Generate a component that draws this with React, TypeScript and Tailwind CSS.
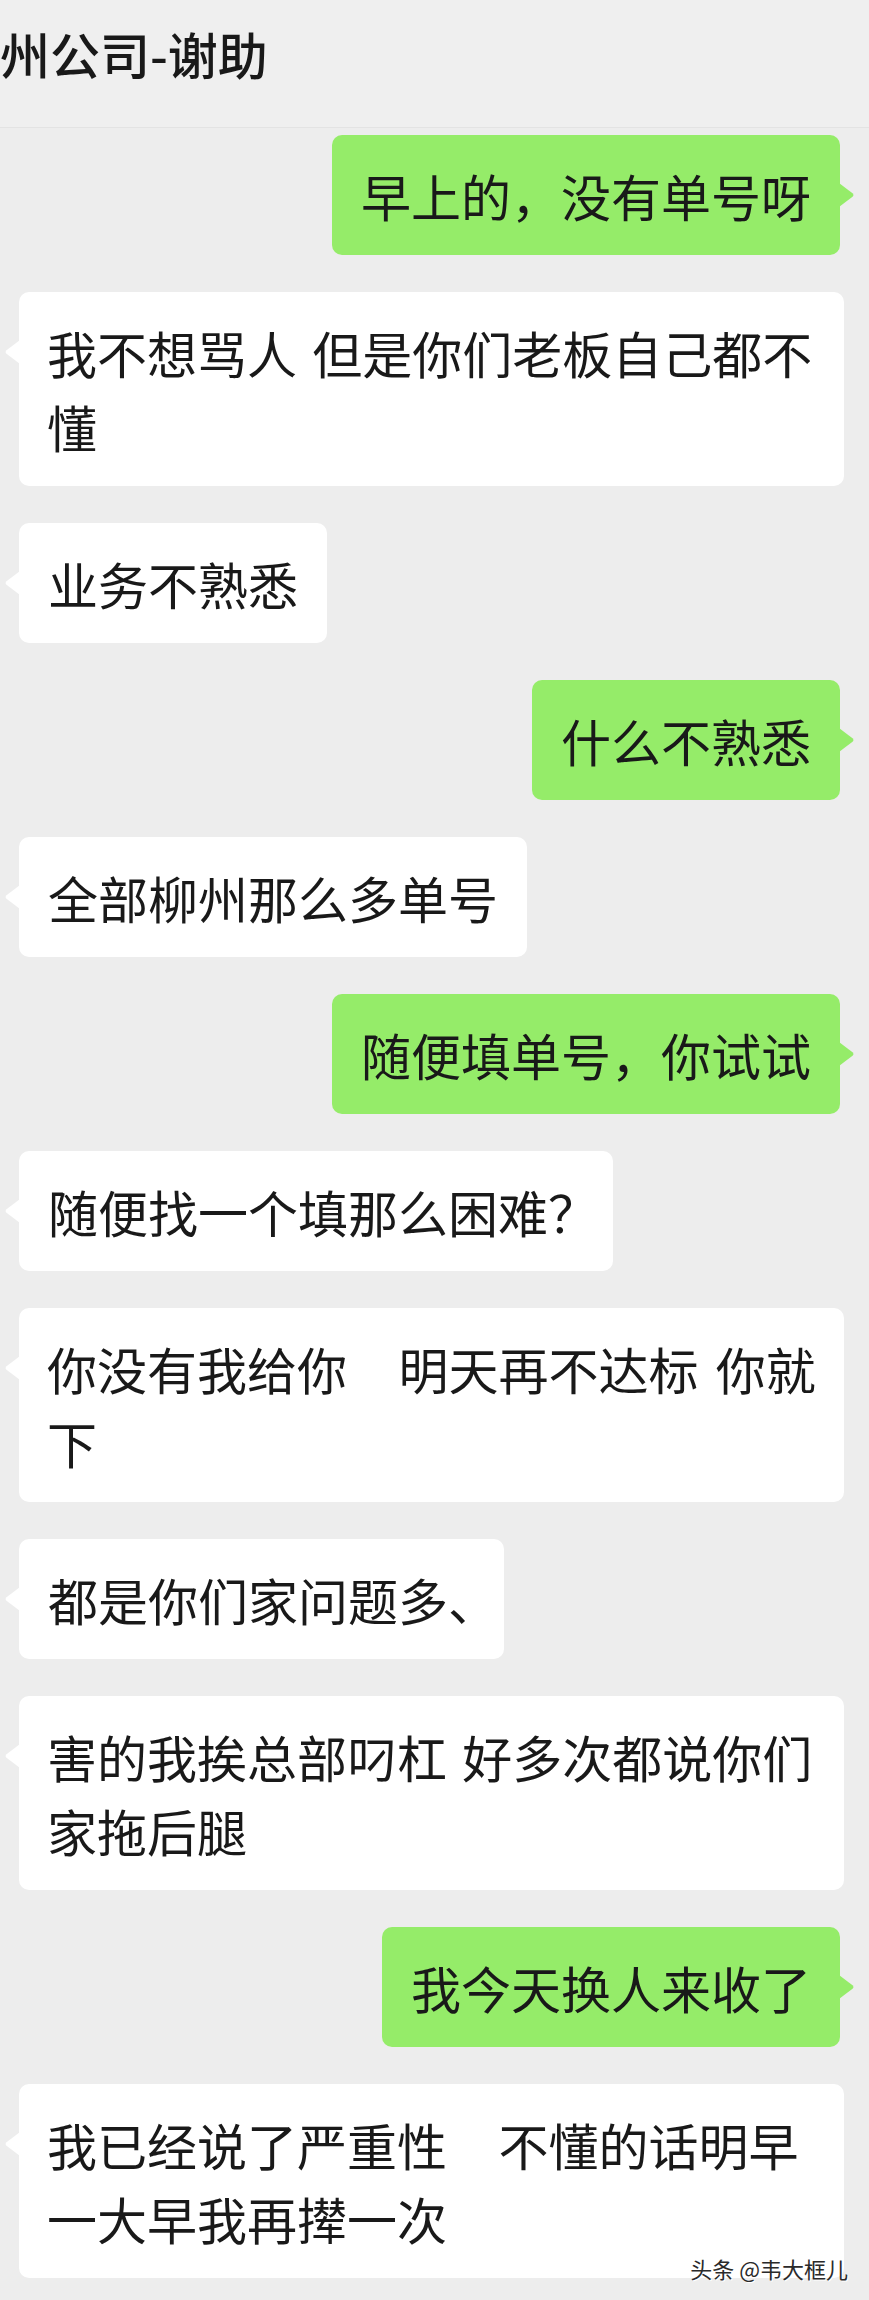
import React from 'react';

type Msg = {
  side: 'left' | 'right';
  lines: string[];
  tail?: string; // trailing punctuation, trimmed like the phone renders it
  tailClass?: string;
  wide?: boolean; // messages typed with a run of spaces
};

const MESSAGES: Msg[] = [
  { side: 'right', lines: ['早上的，没有单号呀'] },
  { side: 'left', lines: ['我不想骂人 但是你们老板自己都不', '懂'] },
  { side: 'left', lines: ['业务不熟悉'] },
  { side: 'right', lines: ['什么不熟悉'] },
  { side: 'left', lines: ['全部柳州那么多单号'] },
  { side: 'right', lines: ['随便填单号，你试试'] },
  { side: 'left', lines: ['随便找一个填那么困难'], tail: '？', tailClass: 'mr-[-14px]' },
  { side: 'left', lines: ['你没有我给你   明天再不达标 你就', '下'], wide: true },
  { side: 'left', lines: ['都是你们家问题多'], tail: '、', tailClass: 'mr-[-23px]' },
  { side: 'left', lines: ['害的我挨总部叼杠 好多次都说你们', '家拖后腿'] },
  { side: 'right', lines: ['我今天换人来收了'] },
  { side: 'left', lines: ['我已经说了严重性   不懂的话明早', '一大早我再撵一次'], wide: true },
];

function Tail({ side, color }: { side: 'left' | 'right'; color: string }) {
  // little pointer on the side of the bubble, centred on the first line
  if (side === 'left') {
    return (
      <svg className="absolute left-[-15px] top-[48px]" width="16" height="24" viewBox="0 0 16 24">
        <path d="M16 0 L2.5 10.2 Q0.6 12 2.5 13.8 L16 24 Z" fill={color} />
      </svg>
    );
  }
  return (
    <svg className="absolute right-[-15px] top-[48px]" width="16" height="24" viewBox="0 0 16 24">
      <path d="M0 0 L13.5 10.2 Q15.4 12 13.5 13.8 L0 24 Z" fill={color} />
    </svg>
  );
}

function Bubble({ msg }: { msg: Msg }) {
  const mine = msg.side === 'right';
  const multi = msg.lines.length > 1;
  return (
    <div className={mine ? 'flex justify-end pr-[29px]' : 'flex justify-start pl-[19px]'}>
      <div
        className={[
          'relative rounded-[10px] py-[23px] text-[50px] leading-[74px] text-[#191919] whitespace-pre',
          msg.wide ? '[word-spacing:6px]' : '[word-spacing:4px]',
          mine ? 'bg-[#95ec69]' : 'bg-white',
          multi ? 'w-[825px] pl-[28px] pr-[20px]' : 'px-[29px]',
        ].join(' ')}
      >
        {msg.lines.map((line, i) => (
          <div key={i}>
            {line}
            {msg.tail && i === msg.lines.length - 1 && <span className={msg.tailClass}>{msg.tail}</span>}
          </div>
        ))}
        <Tail side={msg.side} color={mine ? '#95ec69' : '#ffffff'} />
      </div>
    </div>
  );
}

export default function App() {
  return (
    <div className="relative w-[869px] h-[2300px] overflow-hidden bg-[#ededed] font-['Noto_Sans_CJK_SC',sans-serif]">
      <div className="h-[128px] bg-[#efefef] border-b border-[#e3e3e3] pt-[16px]">
        <h1 className="text-[50px] leading-[74px] font-medium text-[#191919] whitespace-nowrap">州公司-谢助</h1>
      </div>

      <div className="flex flex-col gap-[37px] pt-[7px]">
        {MESSAGES.map((m, i) => (
          <Bubble key={i} msg={m} />
        ))}
      </div>

      {/* platform watermark */}
      <div className="absolute right-[21px] top-[2255px] text-[22px] leading-[26px] text-[#2a2a2a] [text-shadow:1px_1px_0_#ffffff]">
        头条 @韦大框儿
      </div>
    </div>
  );
}
